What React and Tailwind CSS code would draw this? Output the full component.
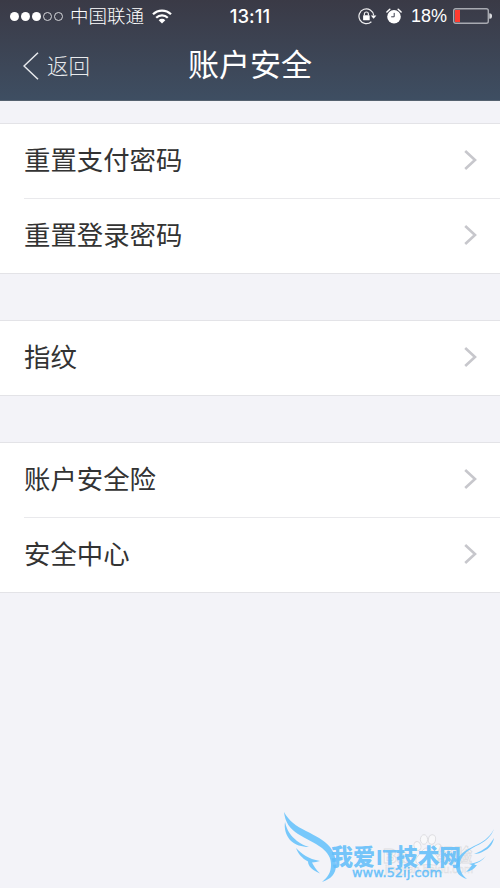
const groups = [
	["重置支付密码", "重置登录密码"],
	["指纹"],
	["账户安全险", "安全中心"],
];

function WifiIcon() {
	return (
		<svg viewBox="0 0 20 15" className="ml-[8px] h-[15px] w-5" fill="none" stroke="white" strokeWidth="2.2">
			<path d="M1 5.3a12.7 12.7 0 0 1 18 0" />
			<path d="M4.2 8.7a8.2 8.2 0 0 1 11.6 0" />
			<path d="M10 14.5 6.7 11.2a4.7 4.7 0 0 1 6.600 0z" fill="white" stroke="none" />
		</svg>
	);
}

function RotationLockIcon() {
	return (
		<svg viewBox="0 0 19 17" className="h-[17px] w-[19px]" fill="none" stroke="#eeeef0" strokeWidth="1.2">
			<path d="M15.7 7.4A7.4 7.4 0 1 0 13.4 13.7" />
			<path d="M12.8 7.4h5.6l-2.8 3.3z" fill="white" stroke="none" />
			<rect x="5.1" y="7.3" width="6.6" height="5" rx="0.5" fill="white" stroke="none" />
			<path d="M6.4 7.6V6a2 2 0 0 1 4 0v1.6" />
		</svg>
	);
}

function AlarmIcon() {
	return (
		<svg viewBox="0 0 16 16" className="mr-px ml-[9px] h-4 w-4" fill="none">
			<circle cx="8" cy="8.700" r="6.8" fill="white" />
			<path d="M0.9 4 3.8 1.2M15.1 4 12.2 1.2" stroke="white" strokeWidth="1.5" strokeLinecap="round" />
			<path d="M8.2 4.9v3.9H5.2" stroke="#3c3f4d" strokeWidth="1" />
		</svg>
	);
}

function StatusBar() {
	return (
		<div className="relative flex h-8 items-center text-white">
			<div className="ml-[10px] flex gap-[2px]">
				{[0, 1, 2, 3, 4].map((i) => (
					<span
						key={i}
						className={
							i < 3
								? "h-[9px] w-[9px] rounded-full bg-white"
								: "h-[9px] w-[9px] rounded-full border border-[#d5d6da]"
						}
					/>
				))}
			</div>
			<span className="mt-[2px] ml-[7px] text-[18.5px] leading-none font-light">中国联通</span>
			<WifiIcon />
			<span className="absolute top-[7px] left-1/2 -translate-x-1/2 font-[Inter,sans-serif] text-[18.5px] leading-[19px] font-medium tracking-[0.1px]">
				13:11
			</span>
			<div className="mr-[8px] ml-auto flex items-center">
				<RotationLockIcon />
				<AlarmIcon />
				<span className="ml-[8px] w-[37px] font-['Liberation_Sans',sans-serif] text-[18px] leading-none whitespace-nowrap">18%</span>
				<svg viewBox="0 0 39 16" className="ml-[5px] h-4 w-[39px]">
					<rect x="0.7" y="0.7" width="34.6" height="14.6" rx="2" fill="none" stroke="#a8aab1" strokeWidth="1.4" />
					<rect x="2" y="2" width="5" height="12" fill="#ff3b30" />
					<path d="M36.3 5.2a2.8 2.8 0 0 1 0 5.6z" fill="#d8d9dc" />
				</svg>
			</div>
		</div>
	);
}

function Header() {
	return (
		<header className="h-[101px] border-b border-[#55616f] bg-linear-to-b from-[#3a3a46] to-[#3e4e62]">
			<StatusBar />
			<div className="grid h-[68px] grid-cols-[1fr_auto_1fr] items-center text-white">
				<div className="flex items-center pl-[23px] text-[#e8eaed]">
					<svg viewBox="0 0 16 28" className="h-7 w-4" fill="none" stroke="currentColor" strokeWidth="1.5">
						<path d="M15 0.7 1 14l14 13.3" />
					</svg>
					<span className="mt-1 ml-[8px] text-[21.5px] leading-none font-light">返回</span>
				</div>
				<h1 className="pb-[1px] text-[31px] leading-none">账户安全</h1>
			</div>
		</header>
	);
}

function Row({ label, first }) {
	return (
		<li className="pl-6">
			<div
				className={
					first
						? "flex h-[74px] items-center justify-between pr-[23px]"
						: "flex h-[75px] items-center justify-between border-t border-[#e9e9ec] pr-[23px]"
				}
			>
				<span className="text-[26.4px] leading-none text-[#333333]">{label}</span>
				<svg viewBox="0 0 13 20" className="mb-[2px] h-5 w-[13px]" fill="none" stroke="#c7c7cc" strokeWidth="2.6">
					<path d="M1.2 1 11 10 1.2 19" />
				</svg>
			</div>
		</li>
	);
}

// Site mark in the corner: wings round the name, over a paler paw mark
function Watermark() {
	return (
		<svg viewBox="280 808 220 80" className="absolute right-0 bottom-0 h-20 w-[220px]">
			<g fill="#f8f8fa" stroke="#dedee2" strokeWidth="1">
				<ellipse cx="417.5" cy="846" rx="3.4" ry="4.5" transform="rotate(-20 417.5 846)" />
				<ellipse cx="424" cy="839.5" rx="3.6" ry="4.8" />
				<ellipse cx="432" cy="839.5" rx="3.6" ry="4.8" transform="rotate(10 432 839.5)" />
				<ellipse cx="437.5" cy="848" rx="3.3" ry="4.3" transform="rotate(30 437.5 848)" />
				<path d="M427 848c-4 0-6 5-9 8-4 4-2 9 3 9 4 0 8-1 12 0 6 1 8-5 4-9-4-3-6-8-10-8z" />
				<text x="383" y="863" fontSize="21" fontWeight="700" textLength="30" lengthAdjust="spacingAndGlyphs">Bai</text>
				<text x="437" y="862" fontSize="18" fontWeight="700" textLength="35" lengthAdjust="spacingAndGlyphs">经验</text>
				<text x="385" y="873" fontSize="11" strokeWidth="0.5" textLength="88" lengthAdjust="spacingAndGlyphs">jingyan.baidu.com</text>
			</g>
			<g fill="#77c8fb">
				<path d="M284 812c5 9 12 14 22 19 10 5 18 9 24 16 4 5 6 11 6 18 0 9-5 14-14 17 6-5 9-10 9-17 0-7-3-12-9-17-8-6-16-9-24-14-8-5-13-12-14-22z" />
				<path d="M285 822c2 9 6 14 12 19 4 3 8 5 12 6-7 0-14-2-19-7-4-5-6-11-5-18z" />
				<path d="M296 848c6 6 12 11 24 13-3 1-5 1-8 1.500 2 4 4 7 8 11-7-3-12-7-12-12-6-3-10-8-12-13.500z" />
				<path d="M494 829c-3 8-9 13-18 17-10 5-16 11-16 19 0 6 2 10 7 14-7-2-11-6-11-13 0-10 8-15 18-20 9-4 15-8 20-17z" />
				<path d="M494 838c-1 6-5 11-10 13-3 2-6 3-10 3 5-2 9-4 13-7 3-3 5-6 7-9z" />
				<path d="M486 856c-4 5-8 7-12 8 1 1 2 1 3 1-3 4-6 6-11 7 2-2 4-4 6-7l-3-1c7-1 12-3 17-8z" />
			</g>
			<g fill="#62befa" fillOpacity="0.9">
				<text y="864.5" fontSize="22.5" fontWeight="800">
					<tspan x="331" textLength="44" lengthAdjust="spacingAndGlyphs">我爱</tspan>
					<tspan x="376" textLength="21" lengthAdjust="spacingAndGlyphs">IT</tspan>
					<tspan x="396" textLength="65" lengthAdjust="spacingAndGlyphs">技术网</tspan>
				</text>
				<text x="352" y="877" fontSize="12.5" fontFamily="DejaVu Sans" textLength="90" stroke="#62befa" strokeWidth="0.4" lengthAdjust="spacingAndGlyphs">www.52ij.com</text>
			</g>
		</svg>
	);
}

export default function App() {
	return (
		<div className="relative h-[888px] w-[500px] overflow-hidden bg-[#f3f3f8] font-['Liberation_Sans','Noto_Sans_CJK_SC',sans-serif]">
			<Header />
			<main className="flex flex-col gap-[46px] pt-[22px]">
				{groups.map((labels) => (
					<ul key={labels[0]} className="border-y border-[#e3e3e7] bg-white">
						{labels.map((label, i) => (
							<Row key={label} label={label} first={i === 0} />
						))}
					</ul>
				))}
			</main>
			<Watermark />
		</div>
	);
}
